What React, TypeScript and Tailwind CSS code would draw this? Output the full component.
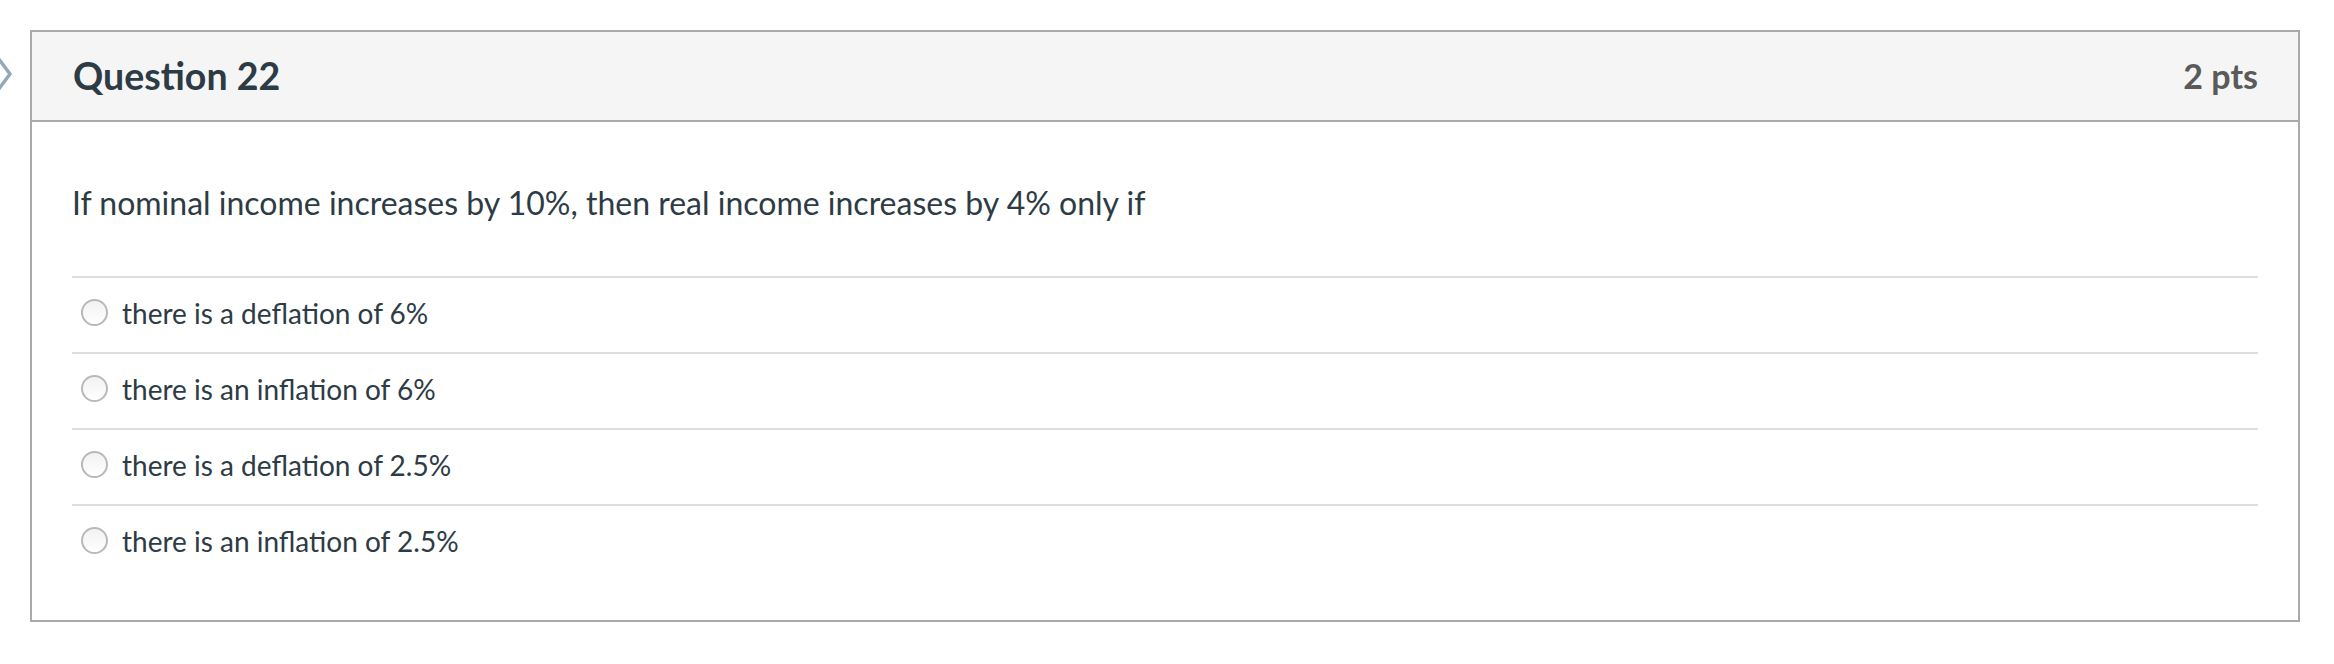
const answers = [
  "there is a deflation of 6%",
  "there is an inflation of 6%",
  "there is a deflation of 2.5%",
  "there is an inflation of 2.5%",
];

function Radio() {
  return (
    <span className="block w-[27px] h-[27px] rounded-full border-2 border-[#b9b9b9] bg-gradient-to-b from-[#f2f2f2] to-white shrink-0" />
  );
}

export default function App() {
  return (
    <div
      className="relative bg-white w-[2334px] h-[664px] pt-[30px] pl-[30px] text-[#2d3b45]"
      style={{ fontFamily: "Lato, 'Noto Sans', sans-serif" }}
    >
      {/* chevron peeking from the left edge */}
      <svg className="absolute left-0 top-[56px]" width="14" height="36" viewBox="0 0 14 36">
        <polyline
          points="-2,2 10,18 -2,34"
          fill="none"
          stroke="#93a8bb"
          strokeWidth="3.5"
          strokeLinejoin="round"
        />
      </svg>

      <div className="w-[2270px] h-[592px] border-2 border-[#aaaaaa]">
        <div className="h-[90px] bg-[#f5f5f5] border-b-2 border-[#aaaaaa] flex items-center justify-between pl-[41px] pr-[40px]">
          <h2 className="text-[37.5px] font-bold leading-none">Question 22</h2>
          <div className="text-[34px] font-bold text-[#5a5a5a] leading-none">2 pts</div>
        </div>

        <div className="px-[40px]">
          <p className="text-[32px] leading-[40px] pt-[61px] pb-[53px]">
            If nominal income increases by 10%, then real income increases by 4% only if
          </p>
          <div>
            {answers.map((a) => (
              <label
                key={a}
                className="flex items-center h-[76px] border-t-2 border-[#dddddd] pl-[9px] pb-[5px] gap-[14px]"
              >
                <Radio />
                <span className="text-[28px]">{a}</span>
              </label>
            ))}
          </div>
        </div>
      </div>
    </div>
  );
}
